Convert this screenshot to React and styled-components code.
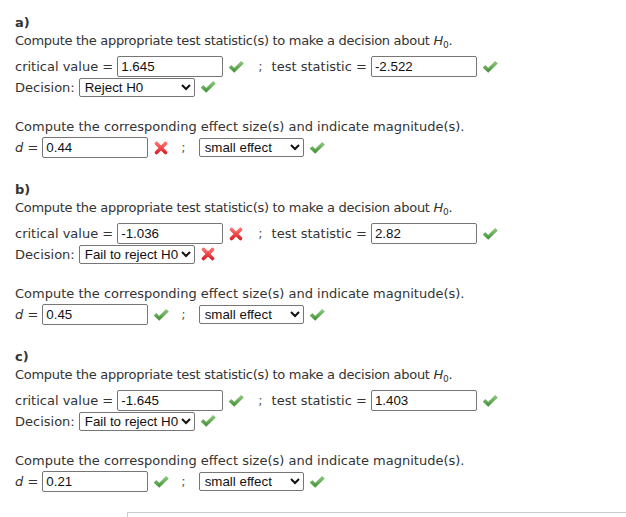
import React from "react";
import styled, { createGlobalStyle } from "styled-components";

const Global = createGlobalStyle`
  html, body { margin: 0; padding: 0; background: #fff; overflow: hidden; }
  body { font-family: "DejaVu Sans", Verdana, sans-serif; font-size: 13px; color: #333; }
`;

const Page = styled.div`
  padding: 14px 0 0 15px;
  width: 611px;
  height: 503px;
  overflow: hidden;
`;

const Section = styled.section`
  display: flex;
  flex-direction: column;
  height: 167px;
`;

const Title = styled.div`
  height: 18px;
  line-height: 18px;
  font-weight: bold;
`;

const Para = styled.div`
  height: 18px;
  line-height: 18px;
  letter-spacing: ${(p) => p.$ls || 0}px;
  margin-top: ${(p) => p.$mt || 0}px;
`;

const Row = styled.div`
  display: flex;
  align-items: center;
  height: ${(p) => p.$h || 21}px;
  margin-top: ${(p) => p.$mt || 0}px;
  white-space: nowrap;
`;

const Label = styled.span`
  margin-right: ${(p) => p.$mr ?? 4}px;
`;

const Semi = styled.span`
  margin: 0 ${(p) => p.$mr ?? 9}px 0 ${(p) => p.$ml ?? 16}px;
  color: #555;
`;

const Input = styled.input`
  box-sizing: border-box;
  width: ${(p) => p.$w}px;
  height: 21px;
  border: 1px solid #767676;
  border-radius: 2px;
  padding: 0 3px;
  font-family: "Liberation Sans", Arial, sans-serif;
  font-size: 13.33px;
  color: #111;
  background: #fff;
  outline: none;
`;

const Select = styled.select`
  box-sizing: border-box;
  width: ${(p) => p.$w}px;
  height: 19px;
  border: 1px solid #767676;
  border-radius: 2px;
  padding: 0 0 0 1px;
  font-family: "Liberation Sans", Arial, sans-serif;
  font-size: 13.33px;
  color: #111;
  background: #fff;
  outline: none;
`;

const Mark = styled.span`
  display: inline-flex;
  width: 16px;
  height: 16px;
  margin-left: ${(p) => p.$ml ?? 5}px;
  align-items: center;
  justify-content: center;
`;

const Sub = styled.sub`
  font-size: 9px;
  vertical-align: -3px;
  line-height: 0;
`;

const Ital = styled.i``;

const BottomBox = styled.div`
  margin-left: 112px;
  margin-top: -3px;
  height: 30px;
  width: 600px;
  border-top: 1px solid #ccc;
  border-left: 1px solid #ccc;
`;

const Check = () => (
  <svg width="16" height="16" viewBox="0 0 16 16">
    <defs>
      <linearGradient id="gck" x1="0" y1="0" x2="0" y2="1">
        <stop offset="0" stopColor="#8fd07a" />
        <stop offset="1" stopColor="#3d8c34" />
      </linearGradient>
    </defs>
    <path d="M1 8.6 L3.4 6.4 L6.2 9.2 L13.2 2.4 L15.3 4.6 L6.2 13.4 Z" fill="url(#gck)" stroke="#4a9a3e" strokeWidth="0.5" strokeLinejoin="round" />
  </svg>
);

const Cross = () => (
  <svg width="16" height="16" viewBox="0 0 16 16">
    <defs>
      <linearGradient id="gx" x1="0" y1="0" x2="0" y2="1">
        <stop offset="0" stopColor="#ff6b6b" />
        <stop offset="1" stopColor="#e0262b" />
      </linearGradient>
    </defs>
    <path d="M3.5 3.5 L12.5 12.5 M12.5 3.5 L3.5 12.5" stroke="url(#gx)" strokeWidth="3.6" strokeLinecap="round" />
  </svg>
);

const Status = ({ ok, ml }) => <Mark $ml={ml}>{ok ? <Check /> : <Cross />}</Mark>;

const H0 = () => (
  <>
    <Ital>H</Ital>
    <Sub>0</Sub>
  </>
);

const data = [
  { k: "a)", cv: "1.645", cvOk: true, ts: "-2.522", tsOk: true, dec: "Reject H0", decOk: true, d: "0.44", dOk: false, mag: "small effect", magOk: true },
  { k: "b)", cv: "-1.036", cvOk: false, ts: "2.82", tsOk: true, dec: "Fail to reject H0", decOk: false, d: "0.45", dOk: true, mag: "small effect", magOk: true },
  { k: "c)", cv: "-1.645", cvOk: true, ts: "1.403", tsOk: true, dec: "Fail to reject H0", decOk: true, d: "0.21", dOk: true, mag: "small effect", magOk: true },
];

const Part = ({ p }) => (
  <Section>
    <Title>{p.k}</Title>
    <Para $ls={-0.3}>
      Compute the appropriate test statistic(s) to make a decision about <H0 />.
    </Para>
    <Row $h={21} $mt={6}>
      <Label>critical value =</Label>
      <Input $w={106} defaultValue={p.cv} readOnly />
      <Status ok={p.cvOk} />
      <Semi $ml={14}>;</Semi>
      <Label>test statistic =</Label>
      <Input $w={106} defaultValue={p.ts} readOnly />
      <Status ok={p.tsOk} />
    </Row>
    <Row $h={20}>
      <Label>Decision:</Label>
      <Select $w={116} defaultValue={p.dec}>
        <option>Reject H0</option>
        <option>Fail to reject H0</option>
      </Select>
      <Status ok={p.decOk} />
    </Row>
    <Para $mt={21}>Compute the corresponding effect size(s) and indicate magnitude(s).</Para>
    <Row $h={21} $mt={1}>
      <Label>
        <Ital>d</Ital> =
      </Label>
      <Input $w={106} defaultValue={p.d} readOnly />
      <Status ok={p.dOk} />
      <Semi $ml={12} $mr={13}>;</Semi>
      <Select $w={105} defaultValue={p.mag}>
        <option>small effect</option>
        <option>medium effect</option>
        <option>large effect</option>
      </Select>
      <Status ok={p.magOk} />
    </Row>
  </Section>
);

export default function App() {
  return (
    <>
      <Global />
      <Page>
        {data.map((p) => (
          <Part key={p.k} p={p} />
        ))}
        <BottomBox />
      </Page>
    </>
  );
}
